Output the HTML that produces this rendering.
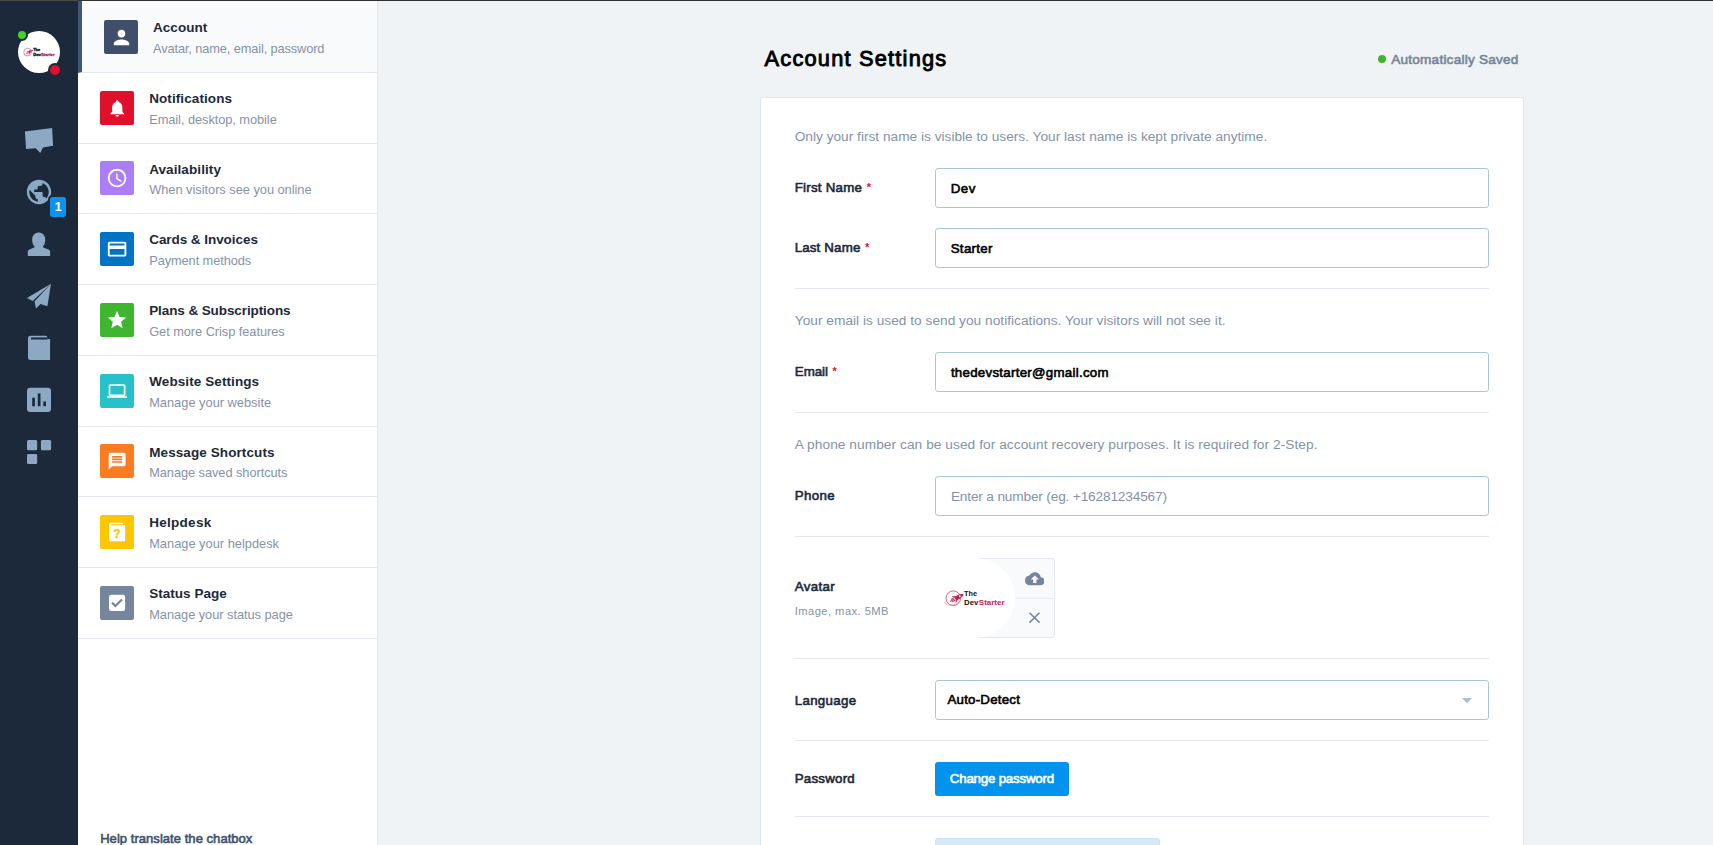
<!DOCTYPE html>
<html lang="en">
<head>
<meta charset="utf-8">
<title>Account Settings</title>
<style>
html,body{margin:0;padding:0}
body{width:1713px;height:845px;overflow:hidden;background:#eff3f6;position:relative;font-family:'Liberation Sans', Arial, sans-serif;}
.t{position:absolute;white-space:nowrap;line-height:normal;margin:0;padding:0}
#topline{position:absolute;left:0;top:0;width:1713px;height:1px;background:linear-gradient(90deg,#4a4a47 0,#4a4a47 78px,#303030 78px);z-index:50}
#side{position:absolute;left:0;top:0;width:78px;height:845px;background:#1c293b}
#menu{position:absolute;left:78px;top:0;width:299px;height:845px;background:#fff;border-right:1px solid #e3e8ef}
.mi{position:absolute;left:78px;width:299px;height:69.75px;border-bottom:1px solid #e3e8ef;}
.mi.act{background:#f9fafc}
.mi.act{border-left:4px solid #435573;width:295px}
.ic{position:absolute;width:34px;height:34px;border-radius:2px;display:flex;align-items:center;justify-content:center}
.ic svg{display:block}
#card{position:absolute;left:760px;top:97px;width:762px;height:800px;background:#fff;border:1px solid #dde8f3;border-radius:2px}
.hr{position:absolute;left:795px;width:694px;height:1px;background:#e3e8ef}
.inp{position:absolute;left:935px;width:552px;height:38px;border:1px solid #a8c5e0;border-radius:3px;background:#fff}
.abs{position:absolute}
</style>
</head>
<body>
<div id="side"></div>
<div id="menu"></div>
<div class="mi act" style="top:1px;height:70.85px"></div>
<div class="ic" style="left:104px;top:20px;background:#3f4f6b"><svg width="23" height="23" viewBox="0 0 24 24" fill="#fff"><path d="M12 12c2.21 0 4-1.79 4-4s-1.79-4-4-4-4 1.79-4 4 1.79 4 4 4zm0 2c-2.67 0-8 1.34-8 4v2h16v-2c0-2.66-5.33-4-8-4z"/></svg></div>
<div class="mi" style="top:72.85px"></div>
<div class="ic" style="left:100px;top:91px;background:#e0102b"><svg width="20.5" height="20.5" viewBox="0 0 24 24" fill="#fff"><path d="M12 22c1.1 0 2-.9 2-2h-4c0 1.1.89 2 2 2zm6-6v-5c0-3.07-1.64-5.64-4.5-6.32V4c0-.83-.67-1.5-1.5-1.5s-1.5.67-1.5 1.5v.68C7.63 5.36 6 7.92 6 11v5l-2 2v1h16v-1l-2-2z"/></svg></div>
<div class="mi" style="top:143.60px"></div>
<div class="ic" style="left:100px;top:161px;background:#ab7df6"><svg width="22.2" height="22.2" viewBox="0 0 24 24" fill="#fff"><path d="M11.99 2C6.47 2 2 6.48 2 12s4.47 10 9.99 10C17.52 22 22 17.52 22 12S17.52 2 11.99 2zM12 20c-4.42 0-8-3.58-8-8s3.58-8 8-8 8 3.58 8 8-3.58 8-8 8zm.5-13H11v6l5.25 3.15.75-1.23-4.5-2.67z"/></svg></div>
<div class="mi" style="top:214.35px"></div>
<div class="ic" style="left:100px;top:232px;background:#0073c4"><svg width="22.2" height="22.2" viewBox="0 0 24 24" fill="#fff"><path d="M20 4H4c-1.11 0-1.99.89-1.99 2L2 18c0 1.11.89 2 2 2h16c1.11 0 2-.89 2-2V6c0-1.11-.89-2-2-2zm0 14H4v-6h16v6zm0-10H4V6h16v2z"/></svg></div>
<div class="mi" style="top:285.10px"></div>
<div class="ic" style="left:100px;top:303px;background:#40b630"><svg width="22" height="22" viewBox="0 0 24 24" fill="#fff"><path d="M12 17.27L18.18 21l-1.64-7.03L22 9.24l-7.19-.61L12 2 9.19 8.63 2 9.24l5.46 4.73L5.82 21z"/></svg></div>
<div class="mi" style="top:355.85px"></div>
<div class="ic" style="left:100px;top:374px;background:#26c1c9"><svg width="20.2" height="20.2" viewBox="0 0 24 24" fill="#fff"><path d="M20 18c1.1 0 2-.9 2-2V6c0-1.1-.9-2-2-2H4c-1.1 0-2 .9-2 2v10c0 1.1.9 2 2 2H0v2h24v-2h-4zM4 6h16v10H4V6z"/></svg></div>
<div class="mi" style="top:426.60px"></div>
<div class="ic" style="left:100px;top:444px;background:#fa7b20"><svg width="20.3" height="20.3" viewBox="0 0 24 24" fill="#fff"><path d="M20 2H4c-1.1 0-1.99.9-1.99 2L2 22l4-4h14c1.1 0 2-.9 2-2V4c0-1.1-.9-2-2-2zm-2 12H6v-2h12v2zm0-3H6V9h12v2zm0-3H6V6h12v2z"/></svg></div>
<div class="mi" style="top:497.35px"></div>
<div class="ic" style="left:100px;top:515px;background:#fcc700"><svg width="34" height="34" viewBox="0 0 34 34"><path fill="#fff" d="M10.5 7.800H21.800Q23 7.800 23.200 9.900H25.100V26.200H10.500Q9 26.200 9 24.700V9.300Q9 7.800 10.500 7.800Z"/><rect x="11.200" y="9.200" width="12" height="1.100" fill="#fcc700"/><text x="17" y="22.800" text-anchor="middle" font-family="Liberation Sans, Arial, sans-serif" font-weight="700" font-size="12" fill="#fcc700" stroke="#fcc700" stroke-width=".3">?</text></svg></div>
<div class="mi" style="top:568.10px"></div>
<div class="ic" style="left:100px;top:586px;background:#75869c"><svg width="34" height="34" viewBox="0 0 34 34"><rect x="9" y="8.800" width="16.100" height="16.100" rx="2.200" fill="#fff"/><path d="M12 16.600L15.400 20L22 13.500" fill="none" stroke="#75869c" stroke-width="2.200"/></svg></div>
<div id="topline"></div>

<!-- sidebar avatar -->
<div class="abs" style="left:18px;top:31px;width:42px;height:42px;border-radius:50%;background:#fff;overflow:hidden">
<svg width="42" height="42" viewBox="0 0 80 80" style="display:block"><g>
<circle cx="18.3" cy="40.2" r="7.3" fill="none" stroke="#c8365f" stroke-width="1"/>
<path d="M9.3 43.600C9.800 47.5 17 48.5 23.5 44.8" fill="none" stroke="#d77a95" stroke-width=".5"/>
<g transform="translate(22.8 39.3) rotate(-28.6)" fill="#c41e54">
<path d="M6.600 0C4.200-2.300 0-2.400-3-1.800L-3 1.800C0 2.400 4.200 2.300 6.600 0Z"/>
<path d="M-.8-2L-4.600-4.100L-3.600-1.700ZM-.8 2L-4.600 4.100L-3.600 1.700Z"/>
<path d="M-3.800-1.300H-7M-3.800 0H-8.800M-3.800 1.300H-7" stroke="#c41e54" stroke-width=".9" fill="none"/>
<circle cx="2.300" cy="0" r=".95" fill="#fff"/>
</g>
<text x="29.100" y="37.9" font-family="Liberation Sans, Arial, sans-serif" font-weight="700" font-size="7.4" fill="#141414" stroke="#141414" stroke-width=".7" textLength="12.9" lengthAdjust="spacingAndGlyphs">The</text>
<text x="29.100" y="47" font-family="Liberation Sans, Arial, sans-serif" font-weight="700" font-size="7.4" fill="#141414" stroke="#141414" stroke-width=".7" textLength="14.300" lengthAdjust="spacingAndGlyphs">Dev</text>
<text x="43.8" y="47" font-family="Liberation Sans, Arial, sans-serif" font-weight="700" font-size="7.4" fill="#c41e54" stroke="#c41e54" stroke-width=".5" textLength="25.800" lengthAdjust="spacingAndGlyphs">Starter</text>
</g></svg>
</div>
<div class="abs" style="left:15.7px;top:28.7px;width:8.4px;height:8.4px;border-radius:50%;background:#40d330;border:2px solid #1c293b"></div>
<div class="abs" style="left:47.8px;top:62.8px;width:10.4px;height:10.4px;border-radius:50%;background:#e0102b;border:2px solid #1c293b"></div>

<!-- sidebar icons -->
<svg class="abs" style="left:0;top:0" width="78" height="845" viewBox="0 0 78 845" fill="#8ca8c3">
<path d="M24.9 131.5L52.1 128L53.1 145.8L43 147.4L40.3 152.9L35.7 148.2L26.1 149Z"/>
<g transform="translate(24.4 177.4) scale(1.2167)"><path d="M12 2C6.48 2 2 6.48 2 12s4.48 10 10 10 10-4.48 10-10S17.52 2 12 2zm-1 17.93c-3.95-.49-7-3.85-7-7.93 0-.62.08-1.21.21-1.79L9 15v1c0 1.1.9 2 2 2v1.93zm6.9-2.54c-.26-.81-1-1.39-1.9-1.39h-1v-3c0-.55-.45-1-1-1H8v-2h2c.55 0 1-.45 1-1V7h2c1.100 0 2-.9 2-2v-.41c2.930 1.190 5 4.060 5 7.410 0 2.080-.8 3.970-2.100 5.390z"/></g>
<rect x="32.2" y="232.5" width="13" height="15.2" rx="6.2" ry="6.6"/>
<path d="M27.8 256V251.5Q27.8 250.3 29 249.8L34.5 247.300V245H43V247.300L48.9 249.8Q50.1 250.3 50.1 251.5V256Z"/>
<path d="M51 283.7L26.9 298.1L32.7 300.9Z"/>
<path d="M51 283.7L34.5 301.5L36 308.4L40.5 304.1L47.4 306.2Z"/>
<path d="M30.5 335.8H45.5Q47.4 335.8 47.6 338.9H50.1V360.1H30.5Q28 360.1 28 357.6V338.3Q28 335.800 30.5 335.8Z"/>
<rect x="31" y="337.5" width="16.6" height="2" fill="#1c293b"/>
<rect x="27" y="387.800" width="24" height="24.2" rx="3.2"/>
<rect x="32.2" y="397.7" width="2.700" height="8.5" fill="#1c293b"/>
<rect x="37.8" y="393.400" width="2.700" height="12.8" fill="#1c293b"/>
<rect x="43.3" y="401.5" width="2.700" height="4.700" fill="#1c293b"/>
<rect x="27" y="440" width="10.2" height="10.2" rx="1.5"/>
<rect x="40.9" y="440" width="10.2" height="10.2" rx="1.5"/>
<rect x="27" y="453.900" width="10.2" height="10.2" rx="1.5"/>
</svg>
<div class="abs" style="left:48px;top:195px;width:16.200px;height:20.2px;border-radius:4.5px;background:#0a93ef;border:2px solid #1c293b"></div>
<div class="t" style="left:50px;width:16.2px;text-align:center;top:199.6px;font-size:12.4px;font-weight:700;color:#fff">1</div>

<!-- main -->
<div class="abs" style="left:1377.6px;top:54.7px;width:8.600px;height:8.6px;border-radius:50%;background:#40b630"></div>
<div id="card"></div>
<div class="hr" style="top:288px"></div>
<div class="hr" style="top:412px"></div>
<div class="hr" style="top:536px"></div>
<div class="hr" style="top:658px"></div>
<div class="hr" style="top:740px"></div>
<div class="hr" style="top:816px"></div>
<div class="inp" style="top:168px"></div>
<div class="inp" style="top:228px"></div>
<div class="inp" style="top:352px"></div>
<div class="inp" style="top:476px"></div>
<div class="inp" style="top:680px;height:37.5px"></div>
<svg class="abs" style="left:1462px;top:697.5px" width="10" height="6" viewBox="0 0 10 6"><path d="M0 0H10L5 5.5Z" fill="#a8c0db"/></svg>

<!-- avatar box -->
<div class="abs" style="left:975px;top:558px;width:79px;height:77.500px;background:#f9fafc;border:1px solid #e3e8ef;border-left:none;border-radius:0 4px 4px 0"></div>
<div class="abs" style="left:1015px;top:598px;width:39px;height:1px;background:#e9edf3"></div>
<div class="abs" style="left:935px;top:558px;width:80px;height:80px;border-radius:50%;background:#fff;overflow:hidden">
<svg width="80" height="80" viewBox="0 0 80 80" style="display:block"><g>
<circle cx="18.3" cy="40.2" r="7.3" fill="none" stroke="#c8365f" stroke-width=".75"/>
<path d="M9.3 43.600C9.800 47.5 17 48.5 23.5 44.8" fill="none" stroke="#d77a95" stroke-width=".5"/>
<g transform="translate(22.8 39.3) rotate(-28.6)" fill="#c41e54">
<path d="M6.600 0C4.200-2.300 0-2.400-3-1.800L-3 1.800C0 2.400 4.200 2.300 6.600 0Z"/>
<path d="M-.8-2L-4.600-4.100L-3.600-1.700ZM-.8 2L-4.600 4.100L-3.600 1.700Z"/>
<path d="M-3.800-1.300H-7M-3.800 0H-8.800M-3.800 1.300H-7" stroke="#c41e54" stroke-width=".9" fill="none"/>
<circle cx="2.300" cy="0" r=".95" fill="#fff"/>
</g>
<text x="29.100" y="37.9" font-family="Liberation Sans, Arial, sans-serif" font-weight="700" font-size="7.4" fill="#141414" textLength="12.9" lengthAdjust="spacingAndGlyphs">The</text>
<text x="29.100" y="47" font-family="Liberation Sans, Arial, sans-serif" font-weight="700" font-size="7.4" fill="#141414" textLength="14.300" lengthAdjust="spacingAndGlyphs">Dev</text>
<text x="43.8" y="47" font-family="Liberation Sans, Arial, sans-serif" font-weight="700" font-size="7.4" fill="#c41e54" textLength="25.800" lengthAdjust="spacingAndGlyphs">Starter</text>
</g></svg>
</div>
<svg class="abs" style="left:1024.700px;top:568.8px" width="19.6" height="19.6" viewBox="0 0 24 24" fill="#75869c"><path d="M19.35 10.04C18.67 6.59 15.64 4 12 4 9.11 4 6.6 5.64 5.35 8.04 2.34 8.36 0 10.91 0 14c0 3.31 2.69 6 6 6h13c2.76 0 5-2.24 5-5 0-2.64-2.05-4.78-4.65-4.96zM14 13v4h-4v-4H7l5-5 5 5h-3z"/></svg>
<svg class="abs" style="left:1028px;top:611px" width="13" height="13" viewBox="0 0 13 13" stroke="#75869c" stroke-width="1.5" fill="none"><path d="M1.500 1.700L11.500 11.600M11.500 1.700L1.500 11.600"/></svg>

<!-- button -->
<div class="abs" style="left:935px;top:762px;width:134px;height:34px;border-radius:3px;background:#0393ee"></div>
<div class="abs" style="left:935px;top:838px;width:223px;height:20px;border-radius:3px;background:#d5eaf9;border:1px solid #cbe3f5"></div>

<div class="t" style="left:153.0px;top:20.00px;font-size:13.5px;font-weight:700;color:#1c293b;letter-spacing:0.050px;">Account</div>
<div class="t" style="left:153.0px;top:41.00px;font-size:12.8px;font-weight:400;color:#8393a8;letter-spacing:-0.116px;">Avatar, name, email, password</div>
<div class="t" style="left:149.2px;top:91.00px;font-size:13.5px;font-weight:700;color:#1c293b;letter-spacing:0.086px;">Notifications</div>
<div class="t" style="left:149.2px;top:112.00px;font-size:12.8px;font-weight:400;color:#8393a8;letter-spacing:-0.055px;">Email, desktop, mobile</div>
<div class="t" style="left:149.2px;top:162.00px;font-size:13.5px;font-weight:700;color:#1c293b;letter-spacing:0.084px;">Availability</div>
<div class="t" style="left:149.2px;top:182.00px;font-size:12.8px;font-weight:400;color:#8393a8;letter-spacing:-0.018px;">When visitors see you online</div>
<div class="t" style="left:149.2px;top:232.00px;font-size:13.5px;font-weight:700;color:#1c293b;letter-spacing:-0.056px;">Cards &amp; Invoices</div>
<div class="t" style="left:149.2px;top:253.00px;font-size:12.8px;font-weight:400;color:#8393a8;letter-spacing:-0.081px;">Payment methods</div>
<div class="t" style="left:149.2px;top:303.00px;font-size:13.5px;font-weight:700;color:#1c293b;letter-spacing:-0.094px;">Plans &amp; Subscriptions</div>
<div class="t" style="left:149.2px;top:324.00px;font-size:12.8px;font-weight:400;color:#8393a8;letter-spacing:-0.048px;">Get more Crisp features</div>
<div class="t" style="left:149.2px;top:374.00px;font-size:13.5px;font-weight:700;color:#1c293b;letter-spacing:0.091px;">Website Settings</div>
<div class="t" style="left:149.2px;top:395.00px;font-size:12.8px;font-weight:400;color:#8393a8;letter-spacing:0.014px;">Manage your website</div>
<div class="t" style="left:149.2px;top:445.00px;font-size:13.5px;font-weight:700;color:#1c293b;letter-spacing:0.094px;">Message Shortcuts</div>
<div class="t" style="left:149.2px;top:465.00px;font-size:12.8px;font-weight:400;color:#8393a8;letter-spacing:-0.054px;">Manage saved shortcuts</div>
<div class="t" style="left:149.2px;top:515.00px;font-size:13.5px;font-weight:700;color:#1c293b;letter-spacing:0.281px;">Helpdesk</div>
<div class="t" style="left:149.2px;top:536.00px;font-size:12.8px;font-weight:400;color:#8393a8;letter-spacing:0.017px;">Manage your helpdesk</div>
<div class="t" style="left:149.2px;top:586.00px;font-size:13.5px;font-weight:700;color:#1c293b;letter-spacing:0.032px;">Status Page</div>
<div class="t" style="left:149.2px;top:607.00px;font-size:12.8px;font-weight:400;color:#8393a8;letter-spacing:-0.033px;">Manage your status page</div>
<div class="t" style="left:100.2px;top:831.00px;font-size:13px;font-weight:400;color:#3f536e;letter-spacing:0.046px;-webkit-text-stroke:0.6px #3f536e;">Help translate the chatbox</div>
<h1 class="t" style="left:764.6px;top:46.00px;font-size:21.8px;font-weight:400;color:#000000;letter-spacing:1.201px;-webkit-text-stroke:0.9px #000000;">Account Settings</h1>
<div class="t" style="left:1391.2px;top:52.00px;font-size:13.6px;font-weight:400;color:#75869c;letter-spacing:0.224px;-webkit-text-stroke:0.6px #75869c;">Automatically Saved</div>
<div class="t" style="left:794.7px;top:129.00px;font-size:13.7px;font-weight:400;color:#8393a8;letter-spacing:0.001px;">Only your first name is visible to users. Your last name is kept private anytime.</div>
<div class="t" style="left:794.7px;top:180.00px;font-size:13.3px;font-weight:400;color:#1c293b;letter-spacing:0.243px;-webkit-text-stroke:0.6px #1c293b;">First Name</div>
<div class="t" style="left:950.7px;top:181.00px;font-size:13.3px;font-weight:400;color:#000000;letter-spacing:0.472px;-webkit-text-stroke:0.6px #000000;">Dev</div>
<div class="t" style="left:794.7px;top:240.00px;font-size:13.3px;font-weight:400;color:#1c293b;letter-spacing:0.163px;-webkit-text-stroke:0.6px #1c293b;">Last Name</div>
<div class="t" style="left:950.7px;top:241.00px;font-size:13.3px;font-weight:400;color:#000000;letter-spacing:0.316px;-webkit-text-stroke:0.6px #000000;">Starter</div>
<div class="t" style="left:794.8px;top:313.00px;font-size:13.7px;font-weight:400;color:#8393a8;letter-spacing:0.018px;">Your email is used to send you notifications. Your visitors will not see it.</div>
<div class="t" style="left:794.8px;top:364.00px;font-size:13.3px;font-weight:400;color:#1c293b;letter-spacing:-0.037px;-webkit-text-stroke:0.6px #1c293b;">Email</div>
<div class="t" style="left:950.9px;top:365.00px;font-size:13.3px;font-weight:400;color:#000000;letter-spacing:0.273px;-webkit-text-stroke:0.6px #000000;">thedevstarter@gmail.com</div>
<div class="t" style="left:794.8px;top:437.00px;font-size:13.7px;font-weight:400;color:#8393a8;letter-spacing:0.064px;">A phone number can be used for account recovery purposes. It is required for 2-Step.</div>
<div class="t" style="left:794.8px;top:488.00px;font-size:13.3px;font-weight:400;color:#1c293b;letter-spacing:0.337px;-webkit-text-stroke:0.6px #1c293b;">Phone</div>
<div class="t" style="left:950.9px;top:489.00px;font-size:13.7px;font-weight:400;color:#8393a8;letter-spacing:-0.179px;">Enter a number (eg. +16281234567)</div>
<div class="t" style="left:794.7px;top:579.00px;font-size:13.3px;font-weight:400;color:#1c293b;letter-spacing:0.339px;-webkit-text-stroke:0.6px #1c293b;">Avatar</div>
<div class="t" style="left:794.7px;top:605.00px;font-size:11.2px;font-weight:400;color:#8393a8;letter-spacing:0.445px;">Image, max. 5MB</div>
<div class="t" style="left:794.7px;top:693.00px;font-size:13.3px;font-weight:400;color:#1c293b;letter-spacing:0.333px;-webkit-text-stroke:0.6px #1c293b;">Language</div>
<div class="t" style="left:947.5px;top:692.00px;font-size:13.3px;font-weight:400;color:#000000;letter-spacing:0.218px;-webkit-text-stroke:0.6px #000000;">Auto-Detect</div>
<div class="t" style="left:794.7px;top:771.00px;font-size:13.3px;font-weight:400;color:#1c293b;letter-spacing:0.230px;-webkit-text-stroke:0.6px #1c293b;">Password</div>
<div class="t" style="left:949.8px;top:771.00px;font-size:13.3px;font-weight:400;color:#ffffff;letter-spacing:-0.199px;-webkit-text-stroke:0.6px #ffffff;">Change password</div>
<div class="t" style="left:866.7px;top:181.00px;font-size:11px;font-weight:700;color:#e0102b;letter-spacing:0.000px;">*</div>
<div class="t" style="left:865.1px;top:241.00px;font-size:11px;font-weight:700;color:#e0102b;letter-spacing:0.000px;">*</div>
<div class="t" style="left:832.4px;top:365.00px;font-size:11px;font-weight:700;color:#e0102b;letter-spacing:0.000px;">*</div>
</body>
</html>
